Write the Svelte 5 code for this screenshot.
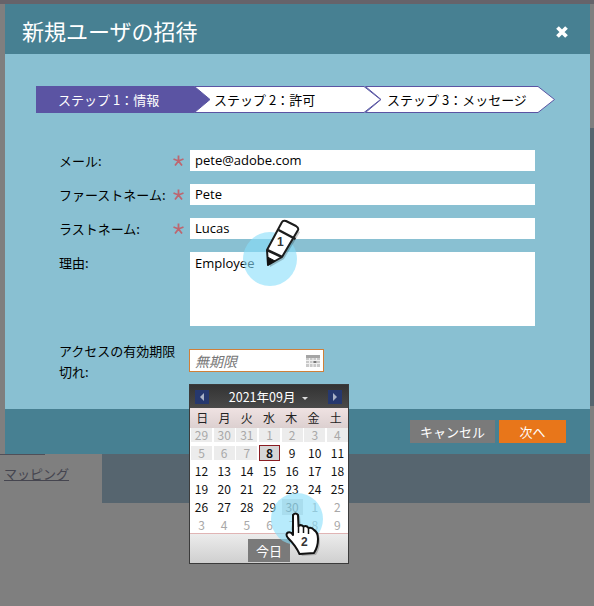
<script>
  const weekdays = ['日', '月', '火', '水', '木', '金', '土'];
  const weeks = [
    [29, 30, 31, 1, 2, 3, 4],
    [5, 6, 7, 8, 9, 10, 11],
    [12, 13, 14, 15, 16, 17, 18],
    [19, 20, 21, 22, 23, 24, 25],
    [26, 27, 28, 29, 30, 1, 2],
    [3, 4, 5, 6, 7, 8, 9]
  ];

  function cellClass(w, d) {
    // days before the 8th are disabled, last row and trailing days belong to other months
    if (w === 1 && d === 3) return 'day today';
    if (w === 0 || (w === 1 && d < 3)) return 'day disabled';
    if (w === 4 && d === 4) return 'day selected';
    if (w === 5 || (w === 4 && d > 4)) return 'day other';
    return 'day';
  }

  const steps = [
    { label: 'ステップ 1：情報', cls: 'active', width: 174, pad: 22 },
    { label: 'ステップ 2：許可', cls: '', width: 187, pad: 20 },
    { label: 'ステップ 3：メッセージ', cls: '', width: 190, pad: 22 }
  ];
</script>

{#snippet star()}
  <svg class="star" width="11" height="11" viewBox="0 0 11 11">
    <path d="M5.500 6 L5.500 0.500 M5.500 6 L0.500 4 M5.500 6 L10.500 4 M5.500 6 L2 10.500 M5.500 6 L9 10.500" stroke="#bd6670" stroke-width="1.800" />
  </svg>
{/snippet}

<div class="page">
  <div class="topbar"></div>
  <div class="under">
    <div class="under-left">
      <span class="under-cut"></span>
      <a class="under-link" href="#map">マッピング</a>
    </div>
    <div class="under-block"></div>
  </div>
  <div class="side-strip"></div>

  <div class="dialog">
    <header class="head">
      <h1>新規ユーザの招待</h1>
      <svg class="close" width="14" height="14" viewBox="0 0 14 14">
        <path d="M2.500 2.500 L11.500 11.500 M11.500 2.500 L2.500 11.500" stroke="#fff" stroke-width="3.800" />
      </svg>
    </header>

    <div class="body">
      <div class="steps">
        {#each steps as s}
          <div class="step {s.cls}" style="width:{s.width}px">
            <svg class="step-bg" width={s.width} height="27" viewBox="0 0 {s.width} 27">
              {#if s.cls === 'active'}
                <polygon points="0,0 {s.width - 16},0 {s.width},13.500 {s.width - 16},27 0,27" fill="#5b54a3" />
              {:else}
                <polygon
                  points="0.500,0.500 {s.width - 17},0.500 {s.width - 0.500},13.500 {s.width - 17},26.500 0.500,26.500 16,13.500"
                  fill="#fff"
                  stroke="#5b54a3"
                />
              {/if}
            </svg>
            <span class="step-text" style="padding-left:{s.pad}px">{s.label}</span>
          </div>
        {/each}
      </div>

      <div class="form">
        <label class="lab" for="mail">メール:</label>
        {@render star()}
        <input id="mail" class="field" value="pete@adobe.com" />

        <label class="lab" for="first">ファーストネーム:</label>
        {@render star()}
        <input id="first" class="field" value="Pete" />

        <label class="lab" for="last">ラストネーム:</label>
        {@render star()}
        <input id="last" class="field" value="Lucas" />

        <label class="lab top" for="why">理由:</label>
        <span></span>
        <textarea id="why" class="area">Employee</textarea>

        <label class="lab expiry" for="until">アクセスの有効期限切れ:</label>
        <span></span>
        <div class="date">
          <input id="until" placeholder="無期限" />
          <svg width="14" height="12" viewBox="0 0 14 12">
            <rect width="14" height="3" fill="#a5a5a5" />
            <rect y="3" width="14" height="9" fill="#c9c9c9" />
            <path d="M0 5.500H14M0 8.500H14M3.500 3V12M7 3V12M10.500 3V12" stroke="#f0f0f0" />
            <rect x="7.500" y="6" width="3" height="2" fill="#777" />
          </svg>
        </div>
      </div>
    </div>

    <footer class="foot">
      <button class="btn cancel">キャンセル</button>
      <button class="btn next">次へ</button>
    </footer>
  </div>

  <div class="cal">
    <div class="cal-head">
      <span class="nav"><i class="tri left"></i></span>
      <span class="month">2021年09月 <i class="caret"></i></span>
      <span class="nav"><i class="tri right"></i></span>
    </div>
    <div class="cal-week">
      {#each weekdays as w}<span>{w}</span>{/each}
    </div>
    <div class="cal-grid">
      {#each weeks as week, wi}
        {#each week as n, di}
          <span class={cellClass(wi, di)}>{n}</span>
        {/each}
      {/each}
    </div>
    <div class="cal-foot"><button class="today-btn">今日</button></div>
  </div>

  <div class="spot one"></div>
  <div class="spot two"></div>

  <svg class="pointer pencil" width="44" height="54" viewBox="0 0 44 54">
    <path d="M22 6 L38 14 L22 41 L8 49 L7 34 Z" fill="#000" opacity=".22" />
    <path d="M20 4 Q21 2 24 3 L34 8 Q37 10 36 12 L20 39 L6 47 L5 32 Z" fill="#fff" stroke="#1c1c1c" stroke-width="2" stroke-linejoin="round" />
    <path d="M16.500 12 L33.500 21" stroke="#1c1c1c" stroke-width="2.500" />
    <path d="M5 32 L20 39" stroke="#1c1c1c" stroke-width="2.500" />
    <path d="M5.500 39 L6 47 L13 43 Z" fill="#111" stroke="#111" />
  </svg>
  <span class="badge b1">1</span>

  <svg class="pointer hand" width="40" height="46" viewBox="0 0 40 46">
    <path d="M12 4 Q14 0 17 4 L18 15 Q21 13 23 16 Q26 14 28 18 Q31 16 33 20 Q37 22 37 29 Q37 37 33 43 L19 44 Q15 36 8 29 Q4 24 7 22 Q10 21 12 25 Z" fill="#000" opacity=".2" />
    <path d="M10 3 Q12.500 0 15 3 L15.500 14 Q18 12 20.500 14.500 Q23.500 13 25.500 16 Q29 15 31 18 Q35 20 35 27 Q35 35 31 41 L16.500 42 Q13 34 5 26 Q2 22 5 20.500 Q8 19.500 10 23 Z" fill="#fff" stroke="#111" stroke-width="2" stroke-linejoin="round" />
    <path d="M15.500 14 V21 M20.500 14.500 V21 M25.500 16 V22" stroke="#111" stroke-width="1.500" />
  </svg>
  <span class="badge b2">2</span>
</div>

<style>
  :global(body) {
    margin: 0;
    background: #7f7f7f;
  }

  .page {
    position: relative;
    width: 594px;
    height: 606px;
    overflow: hidden;
    background: #7f7f7f;
    font-family: "Noto Sans CJK JP", "Noto Sans", sans-serif;
    font-size: 13px;
    color: #000;
  }

  .topbar {
    height: 4px;
    background: #66636a;
  }

  .under {
    display: flex;
    margin-top: 450px;
    height: 49px;
  }

  .under-left {
    width: 102px;
    flex: none;
  }

  .under-cut {
    display: block;
    width: 45px;
    height: 1px;
    background: #4f4f58;
  }

  .under-link {
    display: inline-block;
    margin: 10px 0 0 4px;
    color: #45454f;
    font-size: 13px;
    line-height: 17px;
    text-decoration: underline;
  }

  .under-block {
    width: 488px;
    background: #56656f;
  }

  .side-strip {
    position: absolute;
    left: 590px;
    top: 128px;
    width: 4px;
    height: 278px;
    background: #56656f;
  }

  .dialog {
    position: absolute;
    left: 5px;
    top: 4px;
    width: 585px;
    height: 450px;
    display: flex;
    flex-direction: column;
    background: #89c0d2;
  }

  .head {
    height: 50px;
    flex: none;
    display: flex;
    align-items: center;
    justify-content: space-between;
    padding: 0 21px 0 17px;
    background: #478092;
  }

  h1 {
    margin: 0;
    font-size: 22px;
    font-weight: 400;
    line-height: 50px;
    padding-top: 2px;
    color: #fff;
  }

  .close {
    display: block;
    margin-top: 6px;
  }

  .body {
    flex: 1;
    padding: 32px 31px 0;
  }

  .steps {
    display: flex;
    height: 27px;
  }

  .step {
    position: relative;
    flex: none;
    height: 27px;
    margin-right: -16px;
    color: #000;
  }

  .step-bg {
    position: absolute;
    left: 0;
    top: 0;
  }

  .step-text {
    position: relative;
    display: block;
    line-height: 27px;
    font-size: 13px;
    white-space: nowrap;
  }

  .step.active .step-text {
    color: #fff;
  }

  .form {
    display: grid;
    grid-template-columns: 107px 24px 345px;
    grid-template-rows: 21px 21px 21px 74px 33px;
    row-gap: 13px;
    margin: 37px 0 0 23px;
    align-items: center;
  }

  .lab {
    font-size: 13px;
    line-height: 21px;
    white-space: nowrap;
  }

  .lab.top {
    align-self: start;
  }

  .lab.expiry {
    white-space: normal;
    width: 125px;
    align-self: start;
    margin-top: 1px;
    line-height: 21px;
  }

  .star {
    display: block;
    margin-left: 7px;
  }

  .field,
  .area {
    box-sizing: border-box;
    width: 345px;
    border: 0;
    outline: 0;
    padding: 0 5px;
    margin: 0;
    font-family: "Open Sans", "Noto Sans", sans-serif;
    font-size: 13px;
    color: #000;
    background: #fff;
    border-radius: 0;
  }

  .field {
    height: 21px;
    padding-bottom: 1px;
  }

  .area {
    height: 74px;
    padding-top: 2px;
    resize: none;
    display: block;
  }

  .date {
    box-sizing: border-box;
    display: flex;
    align-items: center;
    width: 135px;
    height: 23px;
    align-self: start;
    margin: 10px 0 0 -1px;
    padding: 0 3px 0 5px;
    border: 1px solid #d08039;
    background: #fff;
  }

  .date input {
    flex: 1;
    min-width: 0;
    border: 0;
    outline: 0;
    padding: 0;
    font: italic 14px "Noto Sans CJK JP", sans-serif;
    background: transparent;
  }

  .date input::placeholder {
    color: #777;
    opacity: 1;
  }

  .foot {
    height: 45px;
    flex: none;
    box-sizing: border-box;
    display: flex;
    justify-content: flex-end;
    gap: 4px;
    padding: 11px 24px 0 0;
    background: #478092;
  }

  .btn {
    height: 23px;
    border: 0;
    padding: 0;
    color: #fff;
    font: 13px "Noto Sans CJK JP", sans-serif;
  }

  .cancel {
    width: 85px;
    background: #7a7a7a;
  }

  .next {
    width: 67px;
    background: #e8761a;
  }

  .cal {
    position: absolute;
    left: 189px;
    top: 384px;
    box-sizing: border-box;
    width: 160px;
    height: 180px;
    display: flex;
    flex-direction: column;
    border: 1px solid #3b3b3b;
    background: #fff;
  }

  .cal-head {
    height: 23px;
    flex: none;
    display: flex;
    align-items: center;
    justify-content: space-between;
    padding: 0 6px 0 5px;
    color: #fff;
    background: linear-gradient(#333, #4a4a4a);
  }

  .month {
    font-size: 12.500px;
    white-space: nowrap;
  }

  .caret {
    display: inline-block;
    margin-left: 4px;
    vertical-align: middle;
    border: 3px solid transparent;
    border-top-color: #ddd;
    border-bottom: 0;
  }

  .nav {
    display: flex;
    align-items: center;
    justify-content: center;
    width: 14px;
    height: 14px;
    background: #26386e;
  }

  .tri {
    width: 0;
    height: 0;
    border: 4px solid transparent;
  }

  .tri.left {
    border-left: 0;
    border-right-color: #a9b2c6;
  }

  .tri.right {
    border-right: 0;
    border-left-color: #a9b2c6;
  }

  .cal-week {
    height: 20px;
    flex: none;
    display: grid;
    grid-template-columns: repeat(7, 1fr);
    padding: 0 1px;
    text-align: center;
    font-size: 12px;
    line-height: 20px;
    color: #222;
    background: linear-gradient(#efe2e2, #dcd0d0);
  }

  .cal-grid {
    flex: 1;
    display: grid;
    grid-template-columns: repeat(7, 21px);
    grid-auto-rows: 16px;
    column-gap: 1.670px;
    row-gap: 2px;
    padding: 0 1px;
    align-content: start;
    margin-top: -1px;
  }

  .day {
    text-align: center;
    font-size: 12px;
    line-height: 16px;
    color: #111;
  }

  .day.disabled {
    margin-top: 1px;
    height: 14px;
    line-height: 14px;
    background: #ececec;
    color: #a8a8a8;
  }

  .day.other {
    color: #a8a8a8;
  }

  .day.selected {
    background: #dcdcdc;
    color: #777;
  }

  .day.today {
    box-sizing: border-box;
    border: 1px solid #8a1c22;
    background: #d6d6d6;
    font-weight: 700;
    line-height: 14px;
  }

  .cal-foot {
    height: 30px;
    flex: none;
    display: flex;
    justify-content: center;
    align-items: flex-end;
    padding-bottom: 1px;
    box-sizing: border-box;
    border-top: 1px solid #e0b4b4;
    background: linear-gradient(#ececec, #cfcfcf);
  }

  .today-btn {
    width: 42px;
    height: 23px;
    border: 0;
    padding: 0;
    color: #fff;
    font: 13px "Noto Sans CJK JP", sans-serif;
    background: #7a7a7a;
  }

  .spot {
    position: absolute;
    border-radius: 50%;
    background: rgba(135, 221, 250, 0.6);
  }

  .spot.one {
    left: 243px;
    top: 232px;
    width: 54px;
    height: 54px;
  }

  .spot.two {
    left: 271px;
    top: 493px;
    width: 52px;
    height: 52px;
  }

  .pointer {
    position: absolute;
  }

  .pencil {
    left: 262px;
    top: 218px;
  }

  .hand {
    left: 283px;
    top: 512px;
  }

  .badge {
    position: absolute;
    font: 700 12px "Liberation Sans", sans-serif;
    color: #333;
  }

  .b1 {
    left: 277px;
    top: 235px;
  }

  .b2 {
    left: 301px;
    top: 535px;
  }
</style>
